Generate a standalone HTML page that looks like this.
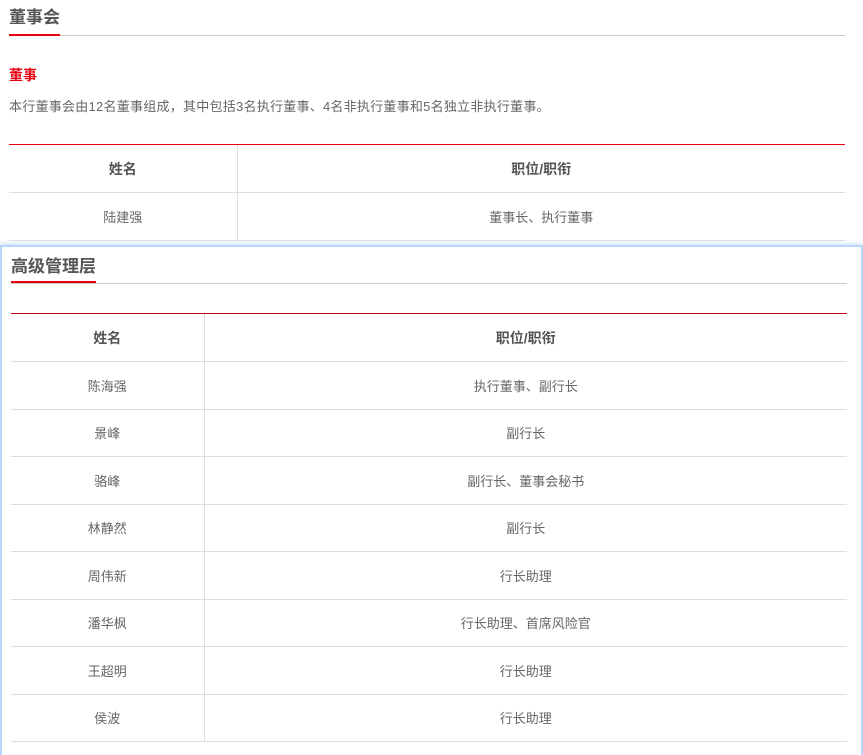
<!DOCTYPE html>
<html><head><meta charset="utf-8"><style>
*{margin:0;padding:0;box-sizing:border-box}
body{width:863px;height:755px;overflow:hidden;background:#fff;font-family:"Liberation Sans","Noto Sans CJK SC",sans-serif;color:#666;position:relative}
.abs{position:absolute}
h2{position:absolute;font-size:17px;font-weight:bold;color:#555;line-height:20px}
table{position:absolute;border-collapse:collapse;font-size:13px;color:#666}
td,th{text-align:center;border-bottom:1px solid #ddd;height:47.5px;padding:0}
th{font-weight:bold;color:#555;font-size:14px}
td.l,th.l{border-right:1px solid #ddd}
</style></head><body>
<h2 style="left:9px;top:8px">董事会</h2>
<div class="abs" style="left:9px;top:35px;width:836px;height:1px;background:#ccc"></div>
<div class="abs" style="left:9px;top:34px;width:51px;height:2px;background:#e60012"></div>
<div class="abs" style="left:9px;top:65px;font-size:14px;font-weight:bold;color:#e60012">董事</div>
<div class="abs" style="left:9px;top:96px;font-size:13px;letter-spacing:0.25px;color:#666">本行董事会由12名董事组成，其中包括3名执行董事、4名非执行董事和5名独立非执行董事。</div>
<div class="abs" style="left:9px;top:144px;width:836px;height:1px;background:#e60012"></div>
<table style="left:9px;top:145px;width:836px">
<tr><th class="l" style="width:228px">姓名</th><th>职位/职衔</th></tr>
<tr><td class="l">陆建强</td><td>董事长、执行董事</td></tr>
</table>
<div class="abs" style="left:0;top:245px;width:863px;height:510px;background:#fff;border:2px solid #b6d6fb;border-bottom:none;box-shadow:0 -2px 4px #d5e8fd"></div>
<h2 style="left:11px;top:257px">高级管理层</h2>
<div class="abs" style="left:11px;top:283px;width:836px;height:1px;background:#ccc"></div>
<div class="abs" style="left:11px;top:281px;width:85px;height:2px;background:#e60012"></div>
<div class="abs" style="left:11px;top:313px;width:836px;height:1px;background:#c00012"></div>
<table style="left:11px;top:314px;width:836px">
<tr><th class="l" style="width:193px">姓名</th><th>职位/职衔</th></tr>
<tr><td class="l">陈海强</td><td>执行董事、副行长</td></tr>
<tr><td class="l">景峰</td><td>副行长</td></tr>
<tr><td class="l">骆峰</td><td>副行长、董事会秘书</td></tr>
<tr><td class="l">林静然</td><td>副行长</td></tr>
<tr><td class="l">周伟新</td><td>行长助理</td></tr>
<tr><td class="l">潘华枫</td><td>行长助理、首席风险官</td></tr>
<tr><td class="l">王超明</td><td>行长助理</td></tr>
<tr><td class="l">侯波</td><td>行长助理</td></tr>
</table>
</body></html>
